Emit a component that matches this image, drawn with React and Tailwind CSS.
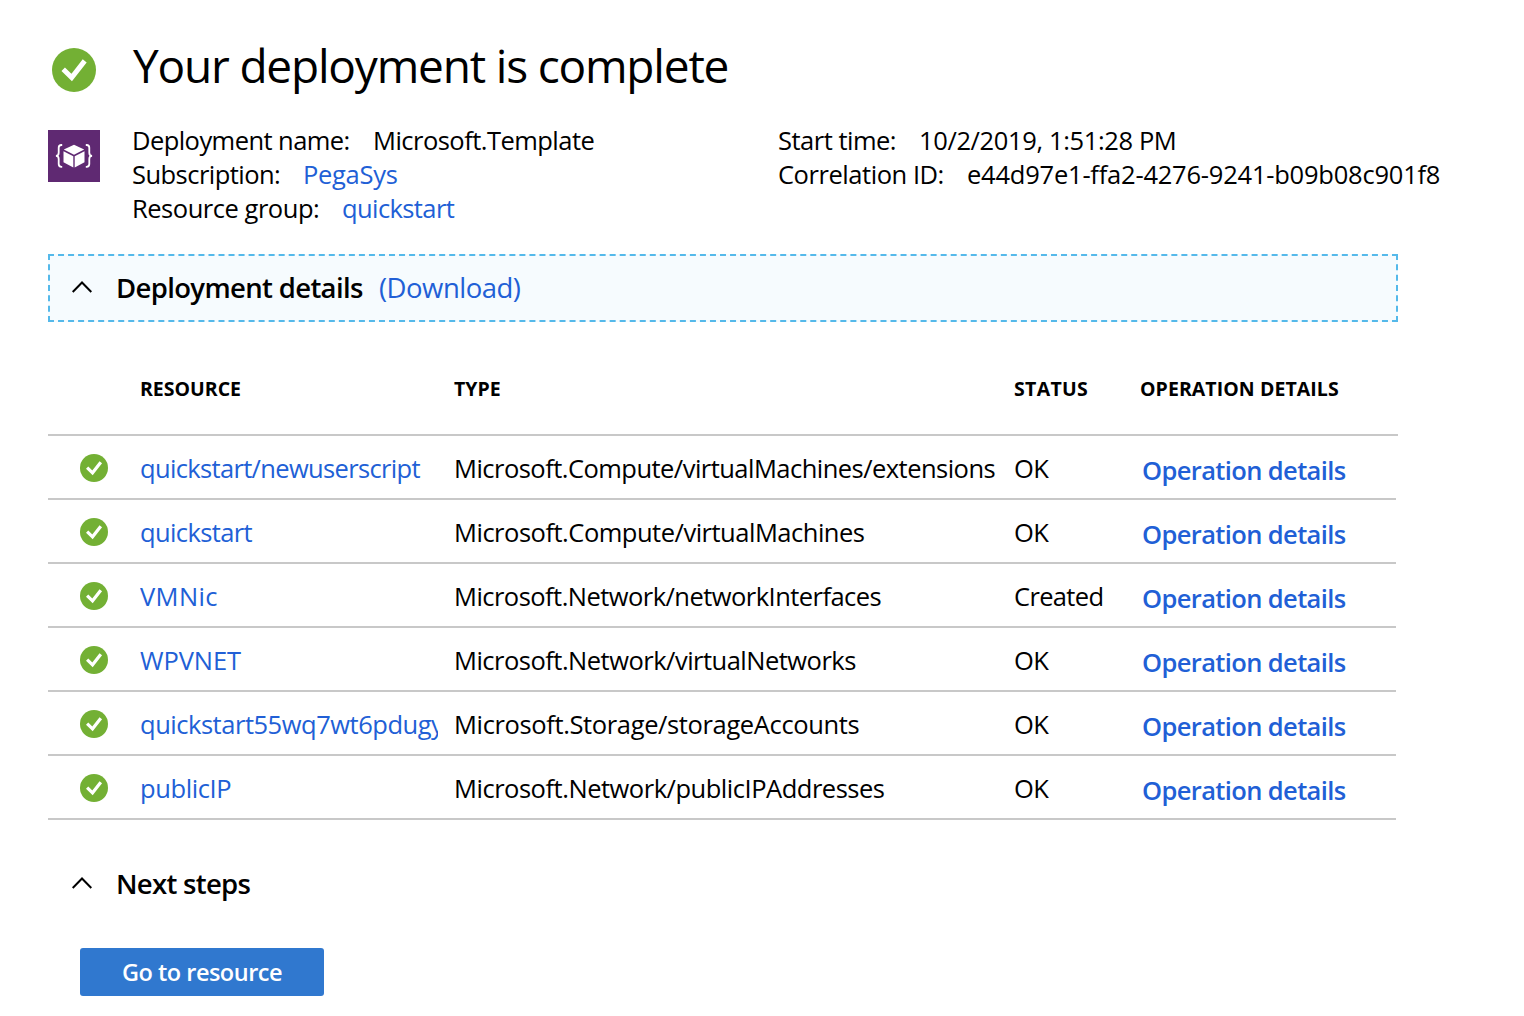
import React from 'react';

function SuccessIcon({ className }) {
  return (
    <svg viewBox="0 0 44 44" className={className} aria-hidden="true">
      <circle cx="22" cy="22" r="22" fill="#73b034" />
      <path d="M11.2 21.3 19.7 29.6 32.7 12.9" fill="none" stroke="#fff" strokeWidth="5" />
    </svg>
  );
}

function TemplateIcon() {
  return (
    <svg viewBox="0 0 52 52" className="size-[52px] shrink-0" aria-hidden="true">
      <rect width="52" height="52" fill="#5f2972" />
      <path d="M26 14.7 36.2 19.6 26 24.8 15.8 19.6Z" fill="#fff" />
      <path d="M15.5 21.2 25.3 26.3V37.6L15.5 32.3Z" fill="#fff" />
      <path d="M36.5 21.2 26.7 26.3V37.6L36.5 32.3Z" fill="#fff" />
      <g fill="none" stroke="#fff" strokeWidth="1.8">
        <path d="M14.200 15h-.8c-2 0-2.700.9-2.700 2.700v5.100c0 2-.8 3.100-2.800 3.100 2 0 2.800 1.100 2.800 3.100v5.100c0 1.800.7 2.700 2.700 2.700h.8" />
        <path d="M37.800 15h.8c2 0 2.700.9 2.700 2.700v5.100c0 2 .8 3.100 2.800 3.100-2 0-2.800 1.100-2.800 3.100v5.100c0 1.800-.7 2.700-2.700 2.700h-.8" />
      </g>
    </svg>
  );
}

function Chevron() {
  return (
    <svg viewBox="0 0 20 12" className="mb-[3px] h-3 w-5 shrink-0" aria-hidden="true">
      <path d="M.7 11 10 1.500 19.300 11" fill="none" stroke="#000" strokeWidth="2" />
    </svg>
  );
}

const rows = [
  { name: 'quickstart/newuserscript', nt: 'tracking-[-0.66px]', type: 'Microsoft.Compute/virtualMachines/extensions', tt: 'tracking-[-0.53px]', status: 'OK' },
  { name: 'quickstart', nt: 'tracking-[-0.62px]', type: 'Microsoft.Compute/virtualMachines', tt: 'tracking-[-0.49px]', status: 'OK' },
  { name: 'VMNic', nt: 'tracking-[0.4px]', type: 'Microsoft.Network/networkInterfaces', tt: 'tracking-[-0.54px]', status: 'Created' },
  { name: 'WPVNET', nt: 'tracking-[-0.08px]', type: 'Microsoft.Network/virtualNetworks', tt: 'tracking-[-0.51px]', status: 'OK' },
  { name: 'quickstart55wq7wt6pdugy', nt: 'tracking-[-0.47px]', type: 'Microsoft.Storage/storageAccounts', tt: 'tracking-[-0.37px]', status: 'OK' },
  { name: 'publicIP', nt: 'tracking-[-0.4px]', type: 'Microsoft.Network/publicIPAddresses', tt: 'tracking-[-0.48px]', status: 'OK' },
];

export default function App() {
  return (
    <main className="h-[1016px] w-[1524px] overflow-hidden bg-white pl-12 font-['Open_Sans',sans-serif] text-[25.5px] leading-[34px] text-black">
      <header className="flex h-[123px] items-start pl-1 pt-[34px]">
        <SuccessIcon className="mt-3.5 size-11 shrink-0" />
        <h1 className="ml-[37px] whitespace-nowrap text-[46px] leading-[62px] tracking-[-1.19px]">Your deployment is complete</h1>
      </header>

      <section className="flex h-[131px] items-start whitespace-nowrap">
        <div className="mt-[7px]">
          <TemplateIcon />
        </div>
        <div className="ml-8 w-[646px]">
          <div className="flex">
            <span className="w-[241px] tracking-[-0.56px]">Deployment name:</span>
            <span className="tracking-[-0.53px]">Microsoft.Template</span>
          </div>
          <div className="flex">
            <span className="w-[171px] tracking-[-0.54px]">Subscription:</span>
            <a className="tracking-[-0.3px] text-[#215fd6]">PegaSys</a>
          </div>
          <div className="flex">
            <span className="w-[210px] tracking-[-0.47px]">Resource group:</span>
            <a className="tracking-[-0.6px] text-[#215fd6]">quickstart</a>
          </div>
        </div>
        <div>
          <div className="flex">
            <span className="w-[141px] tracking-[-0.5px]">Start time:</span>
            <span className="tracking-[-0.37px]">10/2/2019, 1:51:28 PM</span>
          </div>
          <div className="flex">
            <span className="w-[189px] tracking-[-0.45px]">Correlation ID:</span>
            <span className="tracking-[-0.22px]">e44d97e1-ffa2-4276-9241-b09b08c901f8</span>
          </div>
        </div>
      </section>

      <section className="flex h-[68px] w-[1350px] items-center border-2 border-dashed border-[#55b9ea] bg-[#f6fbfe] pl-[22px] text-[27.5px]">
        <Chevron />
        <h2 className="ml-6 w-[263px] whitespace-nowrap font-semibold tracking-[-0.65px]">Deployment details</h2>
        <a className="tracking-[-0.5px] text-[#215fd6]">(Download)</a>
      </section>

      <div className="mt-6 w-[1350px]">
        <div className="grid h-[90px] grid-cols-[92px_314px_560px_126px_1fr] items-center border-b-2 border-[#c8c8c8] pb-0.5 text-[19.5px] font-bold">
          <span />
          <span>RESOURCE</span>
          <span>TYPE</span>
          <span className="tracking-[0.3px]">STATUS</span>
          <span className="tracking-[0.07px]">OPERATION DETAILS</span>
        </div>
        {rows.map((r) => (
          <div key={r.name} className="grid h-16 w-[1348px] grid-cols-[92px_298px_16px_560px_128px_1fr] items-center whitespace-nowrap border-b-2 border-[#c8c8c8]">
            <SuccessIcon className="ml-8 mt-0.5 size-7" />
            <a className={`overflow-hidden pt-0.5 text-[#215fd6] ${r.nt}`}>{r.name}</a>
            <span />
            <span className={`pt-0.5 ${r.tt}`}>{r.type}</span>
            <span className={r.status === 'OK' ? 'pt-0.5 tracking-[-0.5px]' : 'pt-0.5 tracking-[-0.65px]'}>{r.status}</span>
            <a className="pt-1.5 font-semibold tracking-[-0.62px] text-[#215fd6]">Operation details</a>
          </div>
        ))}
      </div>

      <section className="mt-[46px] flex h-9 items-center pl-6 text-[27.5px]">
        <Chevron />
        <h2 className="ml-6 font-semibold tracking-[-0.7px]">Next steps</h2>
      </section>
      <button className="ml-8 mt-[46px] block h-12 w-[244px] rounded-[3px] bg-[#3078cf] text-[23.5px] font-semibold leading-[47px] tracking-[-0.5px] text-white">
        Go to resource
      </button>
    </main>
  );
}
